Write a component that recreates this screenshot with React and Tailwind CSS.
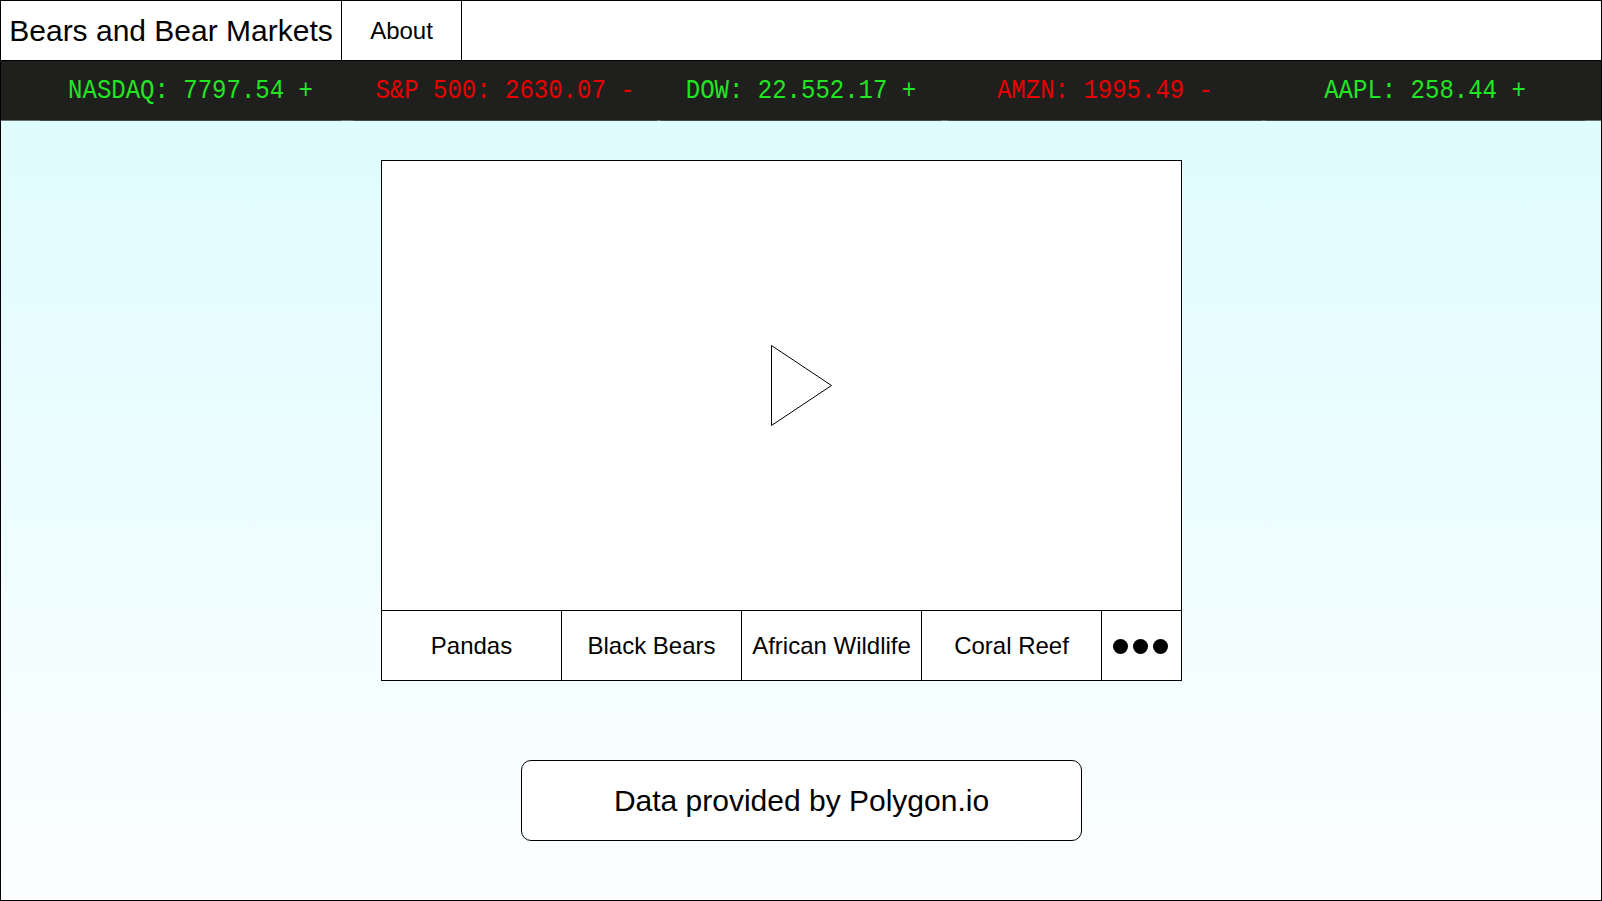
import React from 'react';

const tickers = [
    { label: 'NASDAQ: 7797.54 +', up: true, w: 'w-[301px]', ml: '' },
    { label: 'S&P 500: 2630.07 -', up: false, w: 'w-[304px]', ml: 'ml-[12px]' },
    { label: 'DOW: 22.552.17 +', up: true, w: 'w-[280px]', ml: 'ml-[4px]' },
    { label: 'AMZN: 1995.49 -', up: false, w: 'w-[314px]', ml: 'ml-[7px]' },
    { label: 'AAPL: 258.44 +', up: true, w: 'w-[320px]', ml: 'ml-[3px]' },
];

const tabs = ['Pandas', 'Black Bears', 'African Wildlife', 'Coral Reef'];

const App = () => {
    return (
        <div className="w-[1602px] h-[901px] border border-black flex flex-col bg-white text-black font-['Liberation_Sans',Arial,sans-serif] overflow-hidden">
            {/* Header */}
            <div className="h-[60px] flex border-b border-black bg-white shrink-0">
                <div className="w-[341px] border-r border-black flex items-center justify-center text-[30px] whitespace-nowrap">
                    Bears and Bear Markets
                </div>
                <div className="w-[120px] border-r border-black flex items-center justify-center pt-[1px] text-[24px]">
                    About
                </div>
            </div>

            {/* Ticker */}
            <div className="h-[60px] shrink-0 bg-[#1f201e] border-b border-[#6b6f6d] flex items-stretch pl-[39px] font-['Liberation_Mono','Courier_New',monospace] text-[24px]">
                {tickers.map(t => (
                    <div
                        key={t.label}
                        className={`${t.w} ${t.ml} flex items-center justify-center whitespace-nowrap border-b border-[#454b48] -mb-px ${t.up ? 'text-[#22e622]' : 'text-[#e80000]'}`}
                    >
                        <span className="inline-block scale-y-[1.12]">{t.label}</span>
                    </div>
                ))}
            </div>

            {/* Main */}
            <div className="flex-1 bg-gradient-to-b from-[#dffcff] to-[#fcfeff] flex flex-col">
                {/* Video player */}
                <div className="mt-[39px] ml-[380px] w-[801px] border border-black bg-white flex flex-col">
                    <div className="h-[449px] flex items-center justify-center">
                        <svg width="61" height="81" viewBox="0 0 61 81" className="ml-[40px]">
                            <polygon points="0.5,0.5 0.5,80.5 60.5,40.5" fill="white" stroke="black" strokeWidth="1" />
                        </svg>
                    </div>
                    <div className="h-[70px] border-t border-black flex">
                        {tabs.map(tab => (
                            <div key={tab} className="w-[180px] border-r border-black flex items-center justify-center pt-[1px] text-[24px] whitespace-nowrap">
                                {tab}
                            </div>
                        ))}
                        <div className="flex-1 flex items-center justify-center gap-[5px] pr-[2px] pt-[1px]">
                            <span className="w-[15px] h-[15px] rounded-full bg-black" />
                            <span className="w-[15px] h-[15px] rounded-full bg-black" />
                            <span className="w-[15px] h-[15px] rounded-full bg-black" />
                        </div>
                    </div>
                </div>

                {/* Footer credit */}
                <div className="mt-[79px] ml-[520px] w-[561px] h-[81px] border border-black rounded-[10px] bg-white flex items-center justify-center text-[30px]">
                    Data provided by Polygon.io
                </div>
            </div>
        </div>
    );
};

export default App;
